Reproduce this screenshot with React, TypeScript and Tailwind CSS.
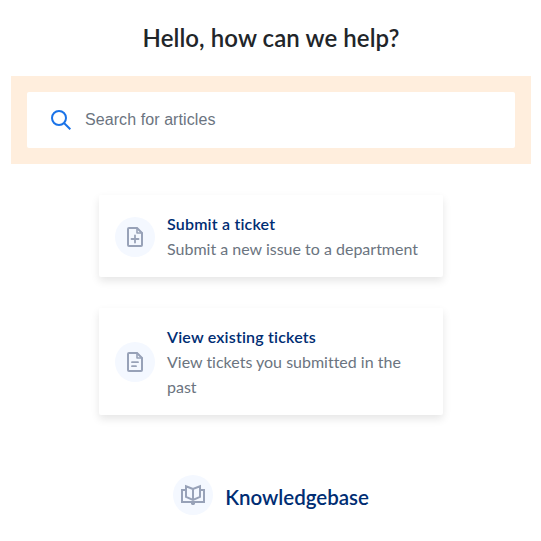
import React from 'react';

const iconProps = {
  fill: 'none',
  stroke: 'currentColor',
  strokeWidth: 2,
  strokeLinecap: 'round' as const,
  strokeLinejoin: 'round' as const,
};

const SearchIcon = () => (
  <svg className="h-5 w-5 shrink-0 text-[#1a73e8]" viewBox="0 0 20 20" {...iconProps} strokeLinecap="butt">
    <circle cx="8" cy="8" r="7" />
    <path d="M13 13l6.3 6.3" />
  </svg>
);

const FileIcon = ({ children }: { children: React.ReactNode }) => (
  <svg className="h-6 w-6" viewBox="0 0 24 24" {...iconProps}>
    <path d="M14 3H6a1 1 0 0 0-1 1v16a1 1 0 0 0 1 1h12a1 1 0 0 0 1-1V8z" />
    <path d="M14 3v5h5" strokeWidth="1.6" />
    {children}
  </svg>
);

const BookIcon = () => (
  <svg className="h-6 w-6" viewBox="0 0 24 24" {...iconProps} strokeLinecap="butt" strokeLinejoin="miter">
    <path d="M12 6L5 3.2v10.6l7 3 7-3V3.2zM12 6v11" />
    <path d="M5 7H1v12h22V7h-4" />
    <path d="M10 19.5h4v1.5l-1 1h-2l-1-1z" fill="currentColor" stroke="none" />
  </svg>
);

const IconCircle = ({ children }: { children: React.ReactNode }) => (
  <div className="mt-px flex h-10 w-10 shrink-0 items-center justify-center rounded-full bg-[#f4f8ff] text-[#98a2b8]">
    {children}
  </div>
);

interface ActionCardProps {
  icon: React.ReactNode;
  title: string;
  description: string;
}

const ActionCard = ({ icon, title, description }: ActionCardProps) => (
  <a
    href="#"
    className="flex items-center gap-3 rounded-[2px] bg-white p-4 shadow-[0_4px_8px_rgba(0,0,0,0.1)]"
  >
    <IconCircle>{icon}</IconCircle>
    <div className="text-base leading-[25px]">
      <h5 className="font-semibold tracking-[0.19px] text-[#002d73]">{title}</h5>
      <p className="text-[#6b7480]">{description}</p>
    </div>
  </a>
);

const App = () => {
  return (
    <div className="h-[541px] overflow-hidden bg-white pl-[11px] pr-[10px] pt-[22px] font-['Lato',sans-serif] [font-variant-ligatures:none]">
      <h1 className="text-center text-2xl leading-8 font-semibold tracking-[0.08px] text-[#212529]">
        Hello, how can we help?
      </h1>

      <div className="mt-[22px] bg-[#ffeedd] p-4">
        <label className="flex h-14 items-center gap-3.5 rounded-[2px] bg-white px-6">
          <SearchIcon />
          <input
            type="text"
            placeholder="Search for articles"
            className="min-w-0 flex-1 font-['Liberation_Sans',sans-serif] text-base tracking-[0.08px] outline-none placeholder:text-[#6b7480]"
          />
        </label>
      </div>

      <div className="mx-[88px] mt-[31.4px] flex flex-col gap-[31px]">
        <ActionCard
          title="Submit a ticket"
          description="Submit a new issue to a department"
          icon={
            <FileIcon>
              <path d="M12 10.5v7M8.5 14h7" strokeWidth="1.8" />
            </FileIcon>
          }
        />
        <ActionCard
          title="View existing tickets"
          description="View tickets you submitted in the past"
          icon={
            <FileIcon>
              <path d="M9 12.2h6M9 16.2h4" strokeWidth="1.8" />
            </FileIcon>
          }
        />
      </div>

      <div className="mt-[58.6px] flex items-center justify-center gap-3">
        <IconCircle>
          <BookIcon />
        </IconCircle>
        <h3 className="pt-1.5 text-[20.5px] leading-7 font-semibold text-[#002d73]">Knowledgebase</h3>
      </div>
    </div>
  );
};

export default App;
